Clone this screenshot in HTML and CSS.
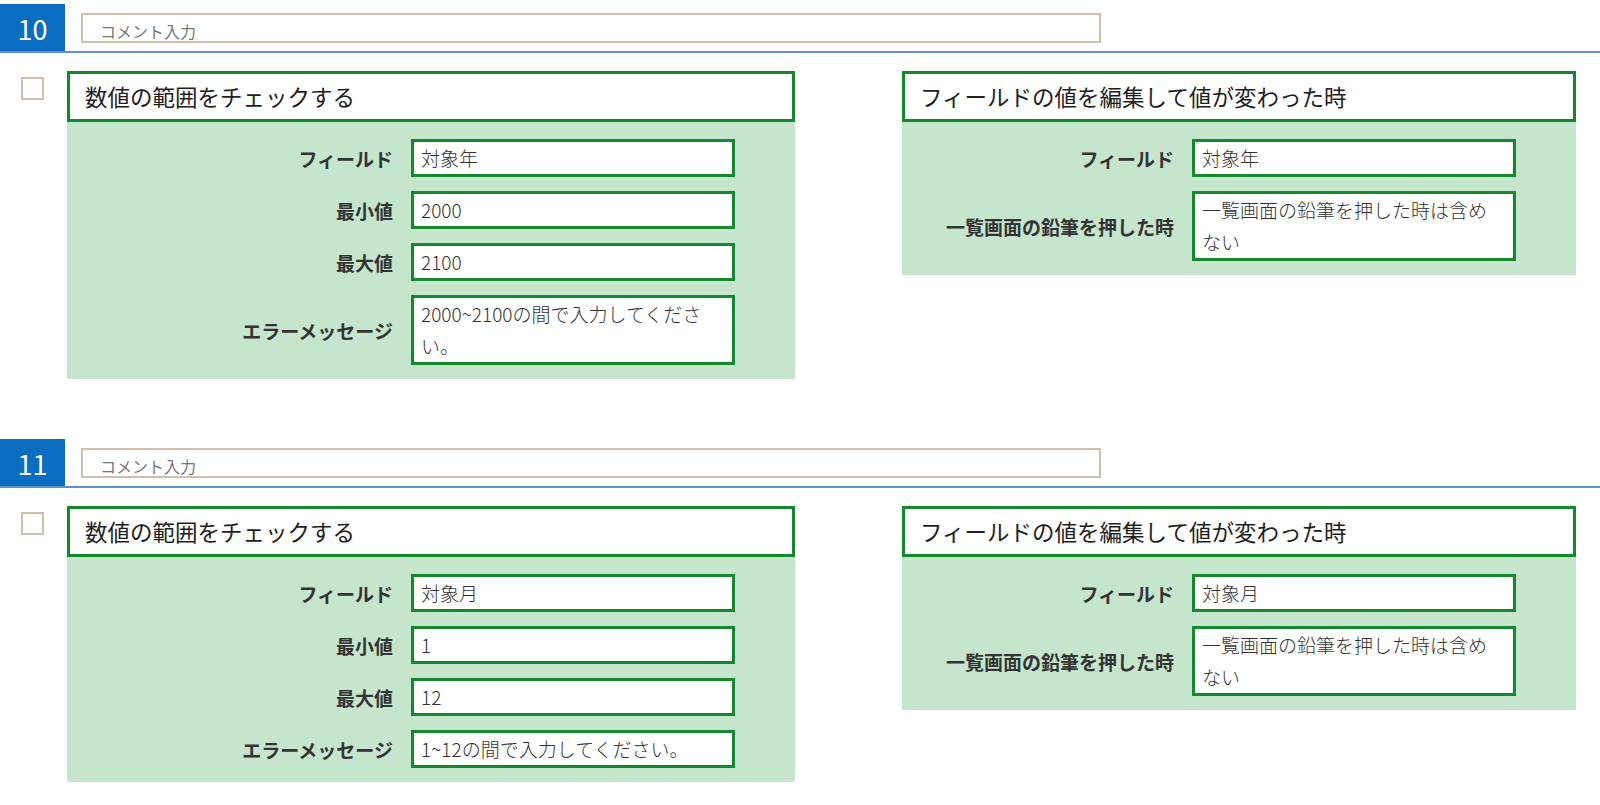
FILE: index.html
```html
<!DOCTYPE html>
<html lang="ja">
  <head>
    <meta charset="UTF-8" />
    <title>アクション設定</title>
    <link rel="stylesheet" href="styles.css">
  </head>
  <body>
    <div class="section">
      <div class="section-head">
        <div class="num">10</div>
        <div class="comment">コメント入力</div>
      </div>
      <div class="section-body">
        <div class="check"></div>
        <div class="card card-check">
          <div class="card-title">数値の範囲をチェックする</div>
          <div class="card-body">
            <div class="row">
              <div class="label">フィールド</div>
              <div class="value">対象年</div>
            </div>
            <div class="row">
              <div class="label">最小値</div>
              <div class="value">2000</div>
            </div>
            <div class="row">
              <div class="label">最大値</div>
              <div class="value">2100</div>
            </div>
            <div class="row">
              <div class="label">エラーメッセージ</div>
              <div class="value">2000~2100の間で入力してください。</div>
            </div>
          </div>
        </div>
        <div class="card card-event">
          <div class="card-title">フィールドの値を編集して値が変わった時</div>
          <div class="card-body">
            <div class="row">
              <div class="label">フィールド</div>
              <div class="value">対象年</div>
            </div>
            <div class="row">
              <div class="label">一覧画面の鉛筆を押した時</div>
              <div class="value">一覧画面の鉛筆を押した時は含めない</div>
            </div>
          </div>
        </div>
      </div>
    </div>

    <div class="section">
      <div class="section-head">
        <div class="num">11</div>
        <div class="comment">コメント入力</div>
      </div>
      <div class="section-body">
        <div class="check"></div>
        <div class="card card-check">
          <div class="card-title">数値の範囲をチェックする</div>
          <div class="card-body">
            <div class="row">
              <div class="label">フィールド</div>
              <div class="value">対象月</div>
            </div>
            <div class="row">
              <div class="label">最小値</div>
              <div class="value">1</div>
            </div>
            <div class="row">
              <div class="label">最大値</div>
              <div class="value">12</div>
            </div>
            <div class="row">
              <div class="label">エラーメッセージ</div>
              <div class="value">1~12の間で入力してください。</div>
            </div>
          </div>
        </div>
        <div class="card card-event">
          <div class="card-title">フィールドの値を編集して値が変わった時</div>
          <div class="card-body">
            <div class="row">
              <div class="label">フィールド</div>
              <div class="value">対象月</div>
            </div>
            <div class="row">
              <div class="label">一覧画面の鉛筆を押した時</div>
              <div class="value">一覧画面の鉛筆を押した時は含めない</div>
            </div>
          </div>
        </div>
      </div>
    </div>
  </body>
</html>
```

FILE: styles.css
```css
body {
  margin: 0;
  padding-top: 4px;
  font-family: "Noto Sans CJK JP", "Noto Sans", sans-serif;
  background: #fff;
  color: #222;
}
.section {
  margin-bottom: 60px;
}
.section-head {
  display: flex;
  align-items: flex-start;
  height: 47px;
  border-bottom: 2px solid #6090d0;
}
.num {
  width: 65px;
  height: 47px;
  background: #0b6dbf;
  color: #fff;
  font-size: 27px;
  line-height: 47px;
  padding-top: 1px;
  box-sizing: border-box;
  text-align: center;
}
.comment {
  width: 1020px;
  height: 30px;
  margin-top: 9px;
  margin-left: 16px;
  border: 2px solid #cdbfab;
  box-sizing: border-box;
  padding: 6px 0 0 17px;
  font-size: 16px;
  line-height: 20px;
  color: #777;
}
.section-body {
  display: flex;
  align-items: flex-start;
  margin-top: 18px;
  padding-left: 21px;
}
.check {
  width: 23px;
  height: 23px;
  margin-top: 6px;
  margin-right: 23px;
  border: 2px solid #cdbfab;
  box-sizing: border-box;
  background: #fff;
}
.card-check {
  width: 728px;
}
.card-event {
  width: 674px;
  margin-left: 107px;
}
.card-title {
  height: 51px;
  border: 3px solid #13882c;
  box-sizing: border-box;
  padding-left: 15px;
  font-size: 22.5px;
  line-height: 44px;
  color: #1e1e1e;
  background: #fff;
}
.card-body {
  background: #c5e5cd;
  padding: 17px 60px 14px 0;
  display: flex;
  flex-direction: column;
  gap: 14px;
}
.row {
  display: flex;
  align-items: center;
  gap: 18px;
}
.label {
  flex: 1;
  text-align: right;
  font-size: 19px;
  font-weight: bold;
  color: #333;
}
.value {
  width: 324px;
  box-sizing: border-box;
  border: 3px solid #13882c;
  background: #fff;
  padding: 0 16px 0 7px;
  font-size: 19px;
  font-weight: 300;
  line-height: 32px;
  color: #333;
}
```
